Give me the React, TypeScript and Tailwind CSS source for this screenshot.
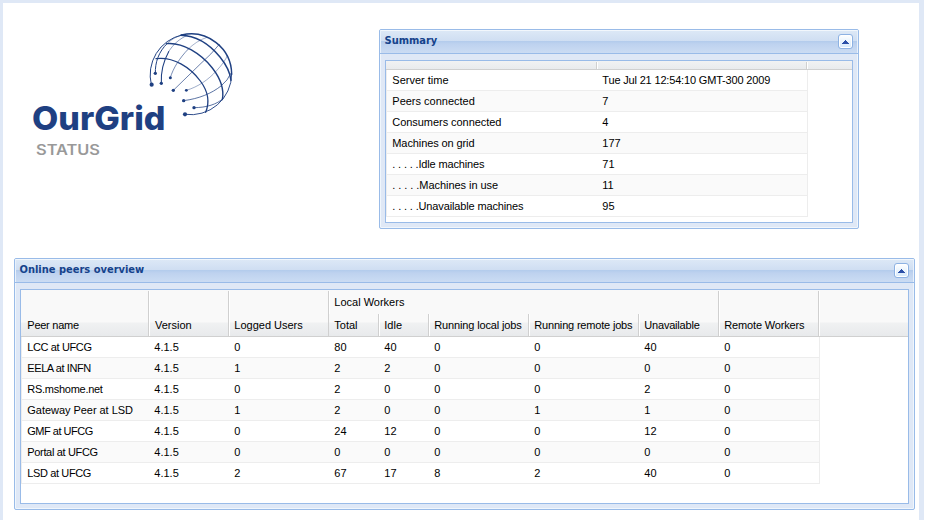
import React from "react";

const summary = [
  ["Server time", "Tue Jul 21 12:54:10 GMT-300 2009"],
  ["Peers connected", "7"],
  ["Consumers connected", "4"],
  ["Machines on grid", "177"],
  [". . . . .Idle machines", "71"],
  [". . . . .Machines in use", "11"],
  [". . . . .Unavailable machines", "95"],
];

const peers = [
  ["LCC at UFCG", "4.1.5", "0", "80", "40", "0", "0", "40", "0"],
  ["EELA at INFN", "4.1.5", "1", "2", "2", "0", "0", "0", "0"],
  ["RS.mshome.net", "4.1.5", "0", "2", "0", "0", "0", "2", "0"],
  ["Gateway Peer at LSD", "4.1.5", "1", "2", "0", "0", "1", "1", "0"],
  ["GMF at UFCG", "4.1.5", "0", "24", "12", "0", "0", "12", "0"],
  ["Portal at UFCG", "4.1.5", "0", "0", "0", "0", "0", "0", "0"],
  ["LSD at UFCG", "4.1.5", "2", "67", "17", "8", "2", "40", "0"],
];

const tracking: Record<string, string> = {
  "Tue Jul 21 12:54:10 GMT-300 2009": "tracking-[-0.17px]",
  "Consumers connected": "tracking-[-0.05px]",
  "Machines on grid": "tracking-[-0.1px]",
  ". . . . .Idle machines": "tracking-[-0.15px]",
  ". . . . .Machines in use": "tracking-[-0.05px]",
  ". . . . .Unavailable machines": "tracking-[-0.14px]",
  "LCC at UFCG": "tracking-[-0.38px]",
  "EELA at INFN": "tracking-[-0.42px]",
  "RS.mshome.net": "tracking-[-0.27px]",
  "Gateway Peer at LSD": "tracking-[-0.04px]",
  "GMF at UFCG": "tracking-[-0.5px]",
  "Portal at UFCG": "tracking-[-0.34px]",
  "LSD at UFCG": "tracking-[-0.38px]",
};

const peerCols = "grid-cols-[127px_80px_100px_50px_50px_100px_110px_80px_100px]";
const sep = "border-r border-[#d0d0d0] shadow-[1px_0_0_#fff]";
const headFill = "bg-[linear-gradient(#f9f9f9_0px,#f9f9f9_32px,#f0f1f2_33px,#e8eaec_46px)]";
const subFill = "bg-[linear-gradient(#f9f9f9_0px,#f9f9f9_8px,#f0f1f2_9px,#e8eaec_22px)]";

function Logo() {
  return (
    <svg className="mt-[22px] ml-[27px] h-[140px] w-[210px] shrink-0" viewBox="0 0 210 140">
      <g transform="translate(110 0) scale(0.33333)" fill="none" stroke="#1f4082" strokeLinecap="round">
        <path d="M34 179A122 122 0 0 1 125 30" strokeWidth="3" />
        <path d="M125 30A122 122 0 0 1 275 148" strokeWidth="4.4" />
        <path d="M275 148A122 122 0 0 1 135 268" strokeWidth="2.8" />
        <path d="M48 101C100 94 151 127 181 168C202 196 210 230 197 262" strokeWidth="3.8" />
        <path d="M80 56C128 51 184 87 217 129C241 160 253 193 247 224" strokeWidth="4.2" />
        <path d="M122 31C176 32 215 66 240 96C257 117 270 139 273 166" strokeWidth="4.4" />
        <path d="M46 145C45 112 56 80 82 55" strokeWidth="3" />
        <path d="M82 55C98 40 114 32 134 29" strokeWidth="1.5" />
        <path d="M64 175C62 137 71 107 86 80" strokeWidth="3.2" />
        <path d="M86 80C100 57 119 41 142 31" strokeWidth="1.5" />
        <path d="M91 158C99 130 119 99 144 73" strokeWidth="1.8" />
        <path d="M144 73C160 57 179 44 201 37" strokeWidth="1.2" />
        <path d="M100 196L180 118Q216 86 238 58" strokeWidth="2" />
        <path d="M139 196C174 186 205 164 229 138Q257 108 262 91" strokeWidth="1.3" />
        <path d="M131 227C178 221 215 205 243 183Q264 166 272 146" strokeWidth="2.2" />
        <path d="M162 248C200 248 231 238 250 220" strokeWidth="2.2" />
        <g fill="#1f4082" stroke="none">
          <circle cx="35" cy="179" r="6.2" />
          <circle cx="46" cy="145" r="5" />
          <circle cx="64" cy="175" r="5" />
          <circle cx="91" cy="158" r="4.5" />
          <circle cx="100" cy="196" r="5" />
          <circle cx="139" cy="196" r="4.3" />
          <circle cx="131" cy="227" r="5" />
          <circle cx="162" cy="248" r="5" />
          <circle cx="135" cy="268" r="6.2" />
        </g>
      </g>
      <text x="2" y="105" textLength="133.5" lengthAdjust="spacingAndGlyphs" fill="#1f4082" className="font-['Inter',sans-serif] text-[33px] font-extrabold">
        OurGrid
      </text>
      <text x="6" y="130" textLength="64" lengthAdjust="spacingAndGlyphs" fill="#999999" className="font-['Inter',sans-serif] text-[14px] font-semibold">
        STATUS
      </text>
    </svg>
  );
}

function Panel({ title, className, children }: { title: string; className: string; children: React.ReactNode }) {
  return (
    <section className={`flex flex-col rounded-[2px] border border-[#99bbe8] bg-[#dfe8f6] shadow-[inset_0_0_0_1px_#f0f6fc] ${className}`}>
      <header className="flex h-6 shrink-0 items-start justify-between border-b border-[#99bbe8] bg-[linear-gradient(#f2f7fc_0px,#f2f7fc_1px,#dce8f6_1px,#cfdef2_11px,#b2cbec_11px,#bed2ef_14px,#cbdcf3_23px)] pr-[5px] pl-[4.5px] shadow-[inset_1px_0_0_#e8f1fb,inset_-1px_0_0_#e8f1fb]">
        <h2 className="pt-[3px] font-['DejaVu_Sans_Condensed','DejaVu_Sans',sans-serif] text-[11px] leading-[16px] font-bold [font-stretch:condensed] whitespace-nowrap text-[#15428b]">
          {title}
        </h2>
        <button className="mt-1 flex h-[15px] w-[15px] items-center justify-center rounded-[3px] border border-[#8db2e3] bg-[linear-gradient(#fff,#d5e9fb)] shadow-[inset_0_0_0_1px_#fff]">
          <svg className="h-[4px] w-[7px]" viewBox="0 0 7 4" shapeRendering="crispEdges">
            <path d="M3 0h1v1h1v1h1v1h1v1H0V3h1V2h1V1h1z" fill="#2c50a8" />
          </svg>
        </button>
      </header>
      <div className="mx-[5px] mt-[6px] mb-[5px] flex flex-1 flex-col border border-[#99bbe8] bg-white">{children}</div>
    </section>
  );
}

function Rows({ data, cols, width }: { data: string[][]; cols: string; width: string }) {
  return (
    <div className={width}>
      {data.map((row, i) => (
        <div
          key={row[0]}
          className={`grid h-[21px] border-x border-b border-[#ededed] ${cols} ${i % 2 ? "bg-[#fafafa]" : "bg-white"}`}
        >
          {row.map((v, j) => (
            <div key={j} className={`pl-[5.3px] leading-[20px] whitespace-nowrap ${tracking[v] ?? ""}`}>
              {v}
            </div>
          ))}
        </div>
      ))}
    </div>
  );
}

export default function App() {
  return (
    <div className="h-[522px] w-[926px] overflow-hidden bg-white font-['Liberation_Sans',sans-serif] text-[11px] text-black">
      <main className="flex h-[520px] w-[924px] flex-col border-t-[3px] border-r-[5px] border-l-[3px] border-[#dfe8f6] bg-white">
        <div className="flex h-[255px] shrink-0 items-start">
          <Logo />
          <Panel title="Summary" className="mt-[26px] ml-[139px] h-[200px] w-[480px] shrink-0">
            <div className="flex h-[9px] border-b border-[#d0d0d0] bg-[linear-gradient(#f1f2f3,#e9ebed)] pt-px">
              <div className={`w-[211px] ${sep}`} />
              <div className={`w-[210px] ${sep}`} />
            </div>
            <Rows data={summary} cols="grid-cols-[210px_210px]" width="w-[422px]" />
          </Panel>
        </div>
        <Panel title="Online peers overview" className="ml-[11px] h-[252px] w-[901px] shrink-0">
          <div className={`flex h-[47px] border-b border-[#d0d0d0] pt-px ${headFill}`}>
            <div className={`w-[128px] pt-[24px] pl-[6.3px] leading-[20px] tracking-[-0.25px] ${sep}`}>Peer name</div>
            <div className={`w-[80px] pt-[24px] pl-[6px] leading-[20px] ${sep}`}>Version</div>
            <div className={`w-[100px] pt-[24px] pl-[5.3px] leading-[20px] ${sep}`}>Logged Users</div>
            <div className={`flex w-[390px] flex-col ${sep}`}>
              <div className="h-[23px] pt-px pl-[5.3px] leading-[20px]">Local Workers</div>
              <div className={`flex h-[22px] leading-[20px] whitespace-nowrap ${subFill}`}>
                <div className={`w-[50px] pt-px pl-[5.3px] ${sep}`}>Total</div>
                <div className={`w-[50px] pt-px pl-[5.3px] ${sep}`}>Idle</div>
                <div className={`w-[100px] pt-px pl-[5.3px] tracking-[-0.15px] ${sep}`}>Running local jobs</div>
                <div className={`w-[110px] pt-px pl-[5.3px] tracking-[-0.18px] ${sep}`}>Running remote jobs</div>
                <div className="pt-px pl-[5.3px] tracking-[-0.2px]">Unavailable</div>
              </div>
            </div>
            <div className={`w-[100px] pt-[24px] pl-[5.3px] leading-[20px] tracking-[-0.16px] ${sep}`}>Remote Workers</div>
          </div>
          <Rows data={peers} cols={peerCols} width="w-[799px]" />
        </Panel>
      </main>
    </div>
  );
}
